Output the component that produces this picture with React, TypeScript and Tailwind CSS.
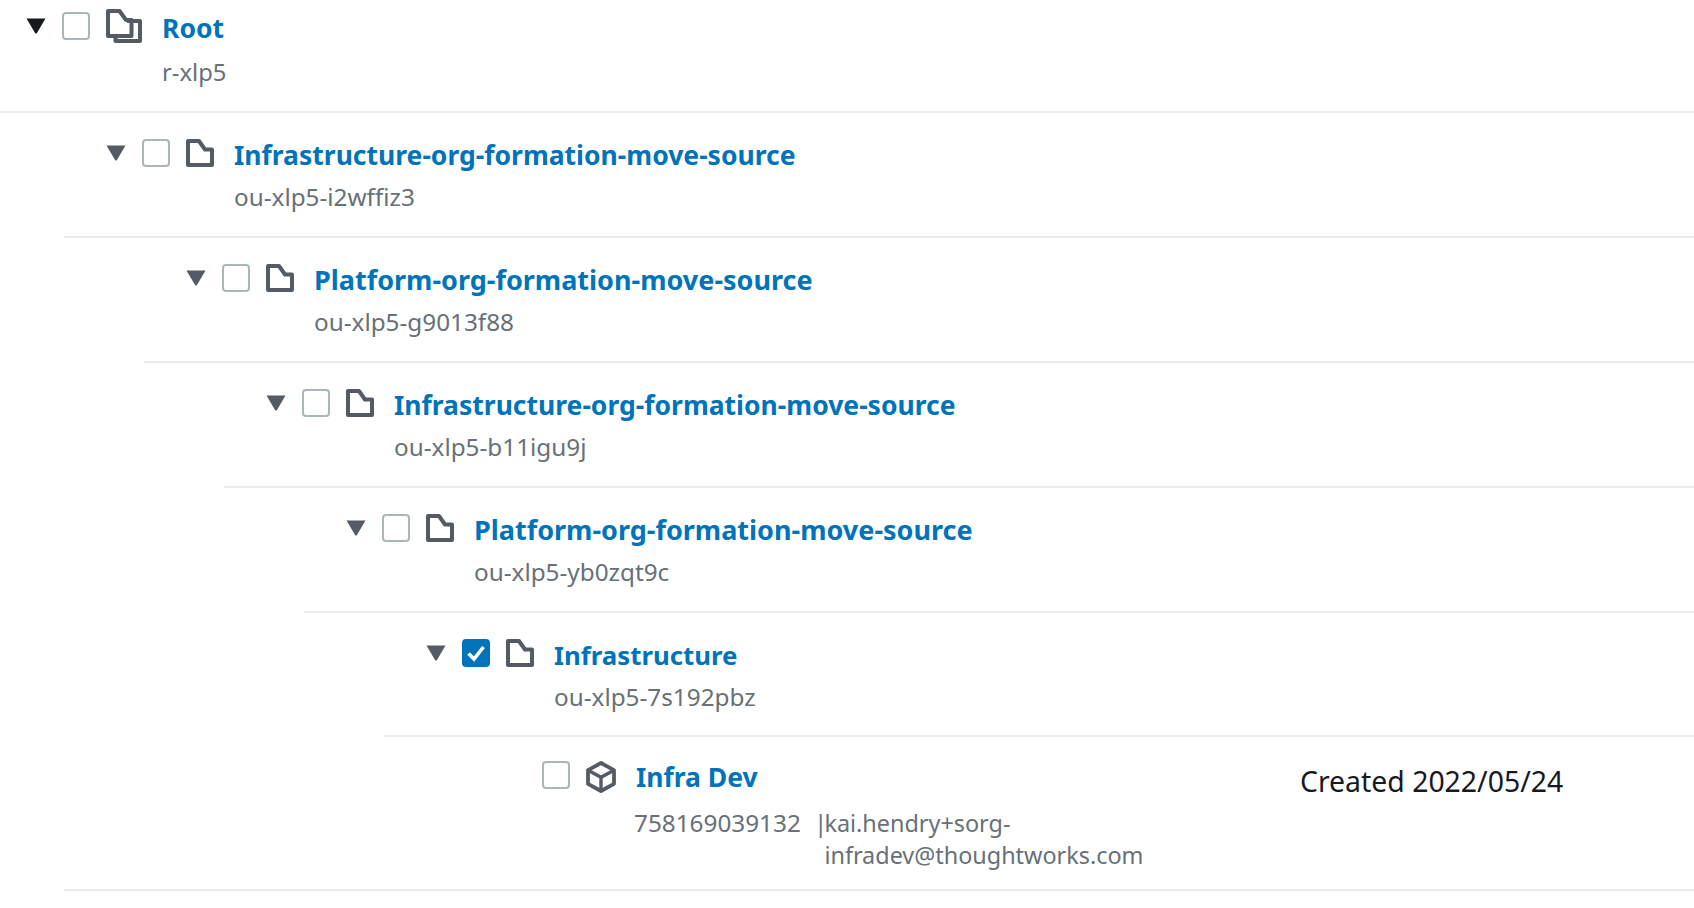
import React from 'react';

const Arrow = ({ dark }: { dark?: boolean }) => (
  <svg width="20" height="16" viewBox="0 0 20 16" className={`mt-[6px] shrink-0 ${dark ? 'text-[#16191f]' : 'text-[#545b64]'}`}>
    <path d="M0.5 0.5H19.5L11 15Q10 16 9 15Z" fill="currentColor" />
  </svg>
);

const Checkbox = ({ checked }: { checked?: boolean }) =>
  checked ? (
    <div className="w-[28px] h-[28px] rounded-[4px] bg-[#0073bb] shrink-0 flex items-center justify-center">
      <svg width="20" height="18" viewBox="0 0 20 18" fill="none">
        <path d="M2.5 9.5L8 15L17.5 3" stroke="white" strokeWidth="3.6" />
      </svg>
    </div>
  ) : (
    <div className="w-[28px] h-[28px] rounded-[4px] border-2 border-[#aab7b8] bg-white shrink-0" />
  );

const FolderIcon = () => (
  <svg width="28" height="28" viewBox="0 0 28 28" fill="none" className="shrink-0 text-[#545b64]">
    <path d="M2 2H13L19 10.5H26V26H2Z" stroke="currentColor" strokeWidth="4" strokeLinejoin="round" />
  </svg>
);

const RootIcon = () => (
  <svg width="36" height="34" viewBox="0 0 36 34" fill="none" className="shrink-0 -mt-[3px] text-[#545b64]">
    <path d="M2 2H13.5L20 11H25.5V27H2Z" stroke="currentColor" strokeWidth="4" strokeLinejoin="round" />
    <path d="M21 12H34V32H9.5V28" stroke="currentColor" strokeWidth="4" strokeLinejoin="round" />
  </svg>
);

const CubeIcon = () => (
  <svg width="30" height="32" viewBox="0 0 30 32" fill="none" className="shrink-0 text-[#545b64]">
    <path d="M15 2L28 9.2V22.8L15 30L2 22.8V9.2Z" stroke="currentColor" strokeWidth="3.8" strokeLinejoin="round" />
    <path d="M2 9.2L15 16.2L28 9.2M15 16.2V30" stroke="currentColor" strokeWidth="3.4" />
  </svg>
);

const ous = [
  { name: 'Infrastructure-org-formation-move-source', id: 'ou-xlp5-i2wffiz3', margin: 'ml-[64px]', size: 'text-[26.5px]' },
  { name: 'Platform-org-formation-move-source', id: 'ou-xlp5-g9013f88', margin: 'ml-[144px]', size: 'text-[27px]' },
  { name: 'Infrastructure-org-formation-move-source', id: 'ou-xlp5-b11igu9j', margin: 'ml-[224px]', size: 'text-[26.5px]' },
  { name: 'Platform-org-formation-move-source', id: 'ou-xlp5-yb0zqt9c', margin: 'ml-[304px]', size: 'text-[27px]' },
  { name: 'Infrastructure', id: 'ou-xlp5-7s192pbz', margin: 'ml-[384px]', size: 'text-[25.8px]', checked: true },
];

export default function App() {
  return (
    <div className="w-[1694px] h-[908px] bg-white overflow-hidden font-['Noto_Sans',sans-serif] text-[24.3px]">
      {/* Root */}
      <div className="h-[113px] border-b-2 border-[#eaeded] pt-[12px] pl-[26px] flex items-start">
        <Arrow dark />
        <div className="ml-[16px]"><Checkbox /></div>
        <div className="ml-[16px]"><RootIcon /></div>
        <div className="ml-[20px]">
          <div className="text-[#0073bb] font-bold leading-[32px] text-[26.5px]">Root</div>
          <div className="text-[#687078] leading-[32px] mt-[12px] text-[23.8px]">r-xlp5</div>
        </div>
      </div>

      {ous.map((ou) => (
        <div key={ou.id} className={`h-[124.9px] border-b-2 border-[#eaeded] pt-[26px] pl-[42px] flex items-start ${ou.margin}`}>
          <Arrow />
          <div className="ml-[16px]"><Checkbox checked={ou.checked} /></div>
          <div className="ml-[16px]"><FolderIcon /></div>
          <div className="ml-[20px]">
            <div className={`text-[#0073bb] font-bold leading-[32px] ${ou.size}`}>{ou.name}</div>
            <div className="text-[#687078] leading-[32px] mt-[10px]">{ou.id}</div>
          </div>
        </div>
      ))}

      {/* Account */}
      <div className="ml-[64px] h-[154px] border-b-2 border-[#eaeded] pt-[24px] pl-[478px] flex items-start">
        <Checkbox />
        <div className="ml-[16px]"><CubeIcon /></div>
        <div className="ml-[20px] w-[664px] shrink-0">
          <div className="text-[#0073bb] font-bold leading-[32px] text-[26.5px]">Infra Dev</div>
          <div className="text-[#687078] leading-[32px] mt-[14px] flex">
            <span className="w-[180px] -ml-[2px] shrink-0">758169039132</span>
            <span>|</span>
            <span className="w-[330px] text-[23.4px] -ml-[3px]">kai.hendry+sorg-infradev@thoughtworks.com</span>
          </div>
        </div>
        <div className="text-[#16191f] leading-[32px] mt-[4px] text-[28.4px]">Created 2022/05/24</div>
      </div>
    </div>
  );
}
